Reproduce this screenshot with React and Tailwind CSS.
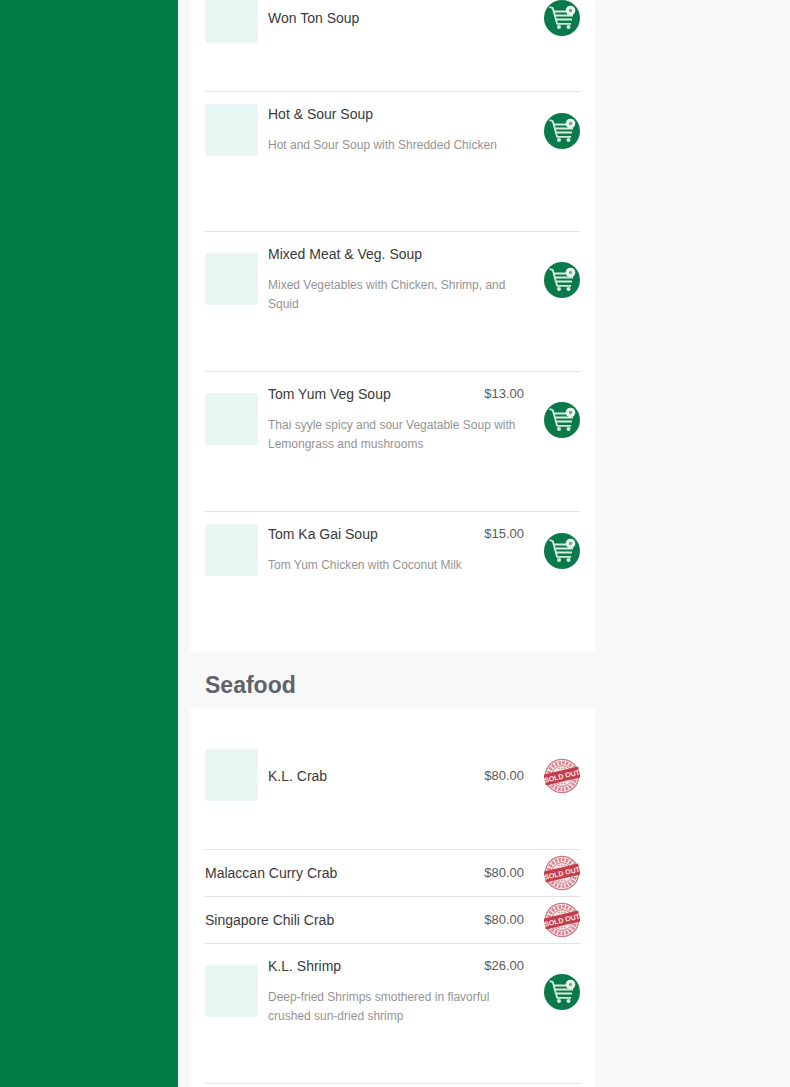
// App.jsx
const font = { fontFamily: '"Liberation Sans", Arial, sans-serif' };

// ── Green add-to-cart button ──────────────────────────────────────────────────
const CartButton = () => (
  <svg width="36" height="36" viewBox="0 0 36 36" className="block shrink-0">
    <circle cx="18" cy="18" r="18" fill="#0b7a4b" />
    <g fill="none" stroke="#d5ebe0" strokeLinejoin="round">
      <path d="M5.5 7l3.3 1.2 4.3 15.6h14" strokeWidth="1.8" />
      <path d="M9.5 11.5h13M10.5 15.4h18.5M11.5 19.4h16.5" strokeWidth="2" />
    </g>
    <circle cx="15" cy="27" r="2" fill="#d5ebe0" />
    <circle cx="24.5" cy="27" r="2" fill="#d5ebe0" />
    <circle cx="26.5" cy="10.5" r="4.8" fill="#e9f4ee" />
    <circle cx="26.5" cy="10.5" r="1.7" fill="#6aad8c" />
  </svg>
);

// ── Sold out stamp ────────────────────────────────────────────────────────────
const SoldOut = () => (
  <svg width="36" height="36" viewBox="0 0 36 36" className="block shrink-0">
    <circle cx="18" cy="18" r="16.6" fill="none" stroke="#cf7580" strokeWidth="1.3" />
    <circle cx="18" cy="18" r="13.4" fill="none" stroke="#d98a93" strokeWidth="4" strokeDasharray="2.6 1.1" />
    <circle cx="18" cy="18" r="10.4" fill="#f6e4e6" stroke="#cf7580" strokeWidth="1" />
    <path d="M14 10.5h8M14 25.5h8" stroke="#d98a93" strokeWidth="1.4" strokeDasharray="1.5 1.5" />
    <g transform="rotate(-13 18 18)">
      <rect x="0.2" y="12.4" width="35.6" height="11.2" fill="#c43d4a" />
      <text x="18" y="20.7" textAnchor="middle" fontSize="7" fontWeight="700" fill="#fbeaec" style={font}>
        SOLD OUT
      </text>
    </g>
  </svg>
);

// ── Menu rows ─────────────────────────────────────────────────────────────────
const ItemRow = ({ name, price, desc, soldOut, height = 'h-[140px]', top = 'pt-3', last }) => (
  <div className={`${height} ${top} ${last ? '' : 'border-b border-[#e3e3e3]'}`}>
    <div className="flex items-center">
      <div className="w-[53px] h-[52px] rounded-[3px] bg-[#e9f7f4] shrink-0" />
      <div className={`ml-[10px] w-[256px] shrink-0 ${desc ? 'min-h-[52px]' : 'mt-[2px]'}`}>
        <div className="flex justify-between items-start">
          <span className="text-[14px] leading-5 text-[#3a3a3a]">{name}</span>
          {price && <span className="text-[13px] leading-[19px] text-[#5a5a5a]">{price}</span>}
        </div>
        {desc && <p className="mt-[12px] text-[12px] leading-[19px] text-[#949494]">{desc}</p>}
      </div>
      <div className="ml-auto mt-[2px]">{soldOut ? <SoldOut /> : <CartButton />}</div>
    </div>
  </div>
);

const SimpleRow = ({ name, price }) => (
  <div className="h-[47px] border-b border-[#e3e3e3] flex items-center">
    <span className="text-[14px] text-[#3a3a3a]">{name}</span>
    <span className="ml-auto mr-[20px] text-[13px] text-[#5a5a5a]">{price}</span>
    <SoldOut />
  </div>
);

export default function App() {
  return (
    <div className="h-[1087px] overflow-hidden flex bg-[#f8f8f8]" style={font}>
      <aside className="w-[178px] shrink-0 bg-[#007d45]" />
      <main className="ml-[12px] w-[405px] shrink-0">
        <section className="bg-white px-[15px] -mt-[49px]">
          <ItemRow name="Won Ton Soup" height="h-[141px]" top="pt-10" />
          <ItemRow name="Hot & Sour Soup" desc="Hot and Sour Soup with Shredded Chicken" />
          <ItemRow
            name="Mixed Meat & Veg. Soup"
            desc="Mixed Vegetables with Chicken, Shrimp, and Squid"
          />
          <ItemRow
            name="Tom Yum Veg Soup"
            price="$13.00"
            desc="Thai syyle spicy and sour Vegatable Soup with Lemongrass and mushrooms"
          />
          <ItemRow
            name="Tom Ka Gai Soup"
            price="$15.00"
            desc="Tom Yum Chicken with Coconut Milk"
            height="h-[139px]"
            last
          />
        </section>

        <h2 className="h-[58px] px-[15px] pt-[10px] flex items-center text-[23px] font-bold text-[#5f6368]">Seafood</h2>

        <section className="bg-white px-[15px] h-[400px]">
          <ItemRow name="K.L. Crab" price="$80.00" soldOut height="h-[141px]" top="pt-10" />
          <SimpleRow name="Malaccan Curry Crab" price="$80.00" />
          <SimpleRow name="Singapore Chili Crab" price="$80.00" />
          <ItemRow
            name="K.L. Shrimp"
            price="$26.00"
            desc="Deep-fried Shrimps smothered in flavorful crushed sun-dried shrimp"
          />
        </section>
      </main>
    </div>
  );
}
